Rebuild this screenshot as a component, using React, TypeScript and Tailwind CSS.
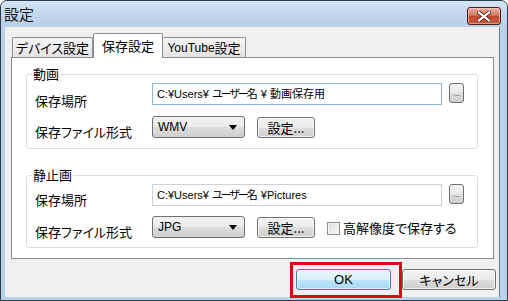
const jp = "font-['Noto_Sans_CJK_JP',sans-serif] [font-feature-settings:'palt']";
const btn =
  "flex items-center justify-center rounded-[3px] border border-[#707070] bg-[linear-gradient(#f2f2f2,#ebebeb_50%,#dddddd_50%,#cfcfcf)] shadow-[inset_0_0_0_1px_rgba(255,255,255,0.7)] text-[13px] leading-none text-black";

const CloseButton = () => (
  <div className="mt-[6px] w-[34px] h-[18px] rounded-[3px] border border-[#4a2018] bg-[linear-gradient(#eab0a2,#d77b69_45%,#c14a35_50%,#c9573b)] shadow-[inset_0_0_0_1px_rgba(255,220,210,0.5)] flex items-center justify-center">
    <svg width="14" height="11" viewBox="0 0 14 11">
      <path d="M2 1.5 L12 9.5 M12 1.5 L2 9.5" stroke="#5a2a20" strokeWidth="4" strokeLinecap="square" />
      <path d="M2 1.5 L12 9.5 M12 1.5 L2 9.5" stroke="#ffffff" strokeWidth="2.2" strokeLinecap="square" />
    </svg>
  </div>
);

const Dropdown = ({ value }: { value: string }) => (
  <div className="w-[93px] h-[22px] flex items-center justify-between rounded-[3px] border border-[#707070] bg-[linear-gradient(#f2f2f2,#ebebeb_50%,#dddddd_50%,#cfcfcf)] pl-[5px] pr-[7px]">
    <span className="font-['Liberation_Sans',sans-serif] text-[12px] leading-none text-black">{value}</span>
    <svg width="8" height="5" viewBox="0 0 8 5">
      <path d="M0 0 L8 0 L4 5 Z" fill="#000" />
    </svg>
  </div>
);

const Browse = () => (
  <div className="ml-[7px] w-[15px] h-[20px] rounded-[3px] border border-[#707070] bg-[linear-gradient(#f2f2f2,#ebebeb_50%,#dddddd_50%,#cfcfcf)] flex items-end justify-center pb-[4px]">
    <span className="font-['Liberation_Sans',sans-serif] text-[8px] leading-none text-[#333]">...</span>
  </div>
);

const PathInput = ({ tail, border }: { tail: React.ReactNode; border: string }) => (
  <div className={`w-[290px] h-[22px] flex items-center bg-white border ${border} pl-[4px]`}>
    <span className="font-['Liberation_Sans','Noto_Sans_CJK_JP',sans-serif] text-[11px] leading-none text-black whitespace-pre">
      C:¥Users¥ <span className="tracking-[-2px]">ユーザー</span>名 ¥{tail}
    </span>
  </div>
);

const Group = ({ title, children }: { title: string; children: React.ReactNode }) => (
  <div className="relative w-[452px] rounded-[3px] border border-[#d5dfe5] pl-[8px] pt-[8px]">
    <span className="absolute -top-[9px] left-[5px] bg-white px-[1px] text-[13px] leading-[16px] text-black">{title}</span>
    {children}
  </div>
);

export default function App() {
  return (
    <div className={`w-[508px] h-[301px] bg-white ${jp}`}>
      <div className="relative w-[508px] h-[301px] flex flex-col rounded-t-[7px] border border-[#2d3b4b] bg-[#bad1ea]">
        {/* title bar */}
        <div className="h-[26px] flex items-start justify-between pl-[3px] pr-[6px] rounded-t-[6px] bg-[linear-gradient(#d6e4f4,#c0d5ec_60%,#b8cfe9)]">
          <span className="mt-[4px] text-[15px] leading-[18px] text-[#1b1b1b]">設定</span>
          <CloseButton />
        </div>

        {/* frame + client */}
        <div className="flex-1 flex pl-[4px] pr-[7px] pb-[3px]">
          <div className="flex-1 flex flex-col bg-[#f0f0f0] border-r border-[#6c7e92]">
            {/* tabs */}
            <div className="mt-[6px] ml-[7px] h-[24px] flex items-end">
              <div className="w-[81px] h-[20px] flex items-center justify-center border border-b-0 border-[#898c95] rounded-t-[2px] bg-[linear-gradient(#f5f5f5,#e4e4e4)] text-[13px] leading-none text-black">
                デバイス設定
              </div>
              <div className="relative z-10 -mb-px w-[70px] h-[25px] flex items-center justify-center border border-b-0 border-[#898c95] rounded-t-[2px] bg-white pb-[2px] text-[13px] leading-none text-black">
                保存設定
              </div>
              <div className="w-[83px] h-[20px] flex items-center justify-center border border-b-0 border-l-0 border-[#898c95] rounded-t-[2px] bg-[linear-gradient(#f5f5f5,#e4e4e4)] text-[13px] leading-none text-black">
                <span className="font-['Liberation_Sans',sans-serif] text-[12px]">YouTube</span>設定
              </div>
            </div>

            {/* tab panel */}
            <div className="ml-[6px] w-[483px] h-[202px] border border-[#898c95] bg-white pl-[14px] pt-[16px]">
              <Group title="動画">
                <div className="flex items-start h-[22px]">
                  <span className="w-[117px] mt-[10px] text-[13px] leading-[16px] text-black">保存場所</span>
                  <PathInput tail=" 動画保存用" border="border-[#8fb6dc]" />
                  <Browse />
                </div>
                <div className="mt-[11px] pb-[8px] flex items-start">
                  <span className="w-[117px] mt-[8px] text-[13px] leading-[16px] text-black">保存ファイル形式</span>
                  <Dropdown value="WMV" />
                  <button className={`ml-[12px] mt-[1px] w-[58px] h-[21px] ${btn}`}>設定...</button>
                </div>
              </Group>

              <div className="mt-[26px]">
                <Group title="静止画">
                  <div className="flex items-start h-[22px]">
                    <span className="w-[117px] mt-[8px] text-[13px] leading-[16px] text-black">保存場所</span>
                    <PathInput tail="Pictures" border="border-[#cdd2d8]" />
                    <Browse />
                  </div>
                  <div className="mt-[10px] pb-[7px] flex items-start">
                    <span className="w-[117px] mt-[8px] text-[13px] leading-[16px] text-black">保存ファイル形式</span>
                    <Dropdown value="JPG" />
                    <button className={`ml-[12px] mt-[1px] w-[58px] h-[21px] ${btn}`}>設定...</button>
                    <div className="ml-[12px] mt-[4px] flex items-center">
                      <div className="w-[13px] h-[13px] border border-[#8e8f8f] bg-[linear-gradient(135deg,#dcdcdc,#f8f8f8)] shadow-[inset_0_0_0_1px_#f4f4f4]" />
                      <span className="ml-[3px] text-[13px] leading-[16px] text-black">高解像度で保存する</span>
                    </div>
                  </div>
                </Group>
              </div>
            </div>

            {/* dialog buttons */}
            <div className="mt-[10px] pr-[3px] flex justify-end gap-[11px]">
              <button className="w-[95px] h-[21px] flex items-center justify-center rounded-[3px] border border-[#3c7fb1] bg-[linear-gradient(#eaf6fd,#d9f0fc_50%,#bee6fd_50%,#a7d9f5)] shadow-[inset_0_0_0_1px_rgba(255,255,255,0.6)] font-['Liberation_Sans',sans-serif] text-[13px] leading-none text-black">
                OK
              </button>
              <button className={`w-[94px] h-[21px] ${btn}`}>キャンセル</button>
            </div>
          </div>
        </div>

        {/* red highlight annotation */}
        <div className="absolute left-[289px] top-[261px] w-[112px] h-[36px] border-[3px] border-[#e2001a]" />
      </div>
    </div>
  );
}
